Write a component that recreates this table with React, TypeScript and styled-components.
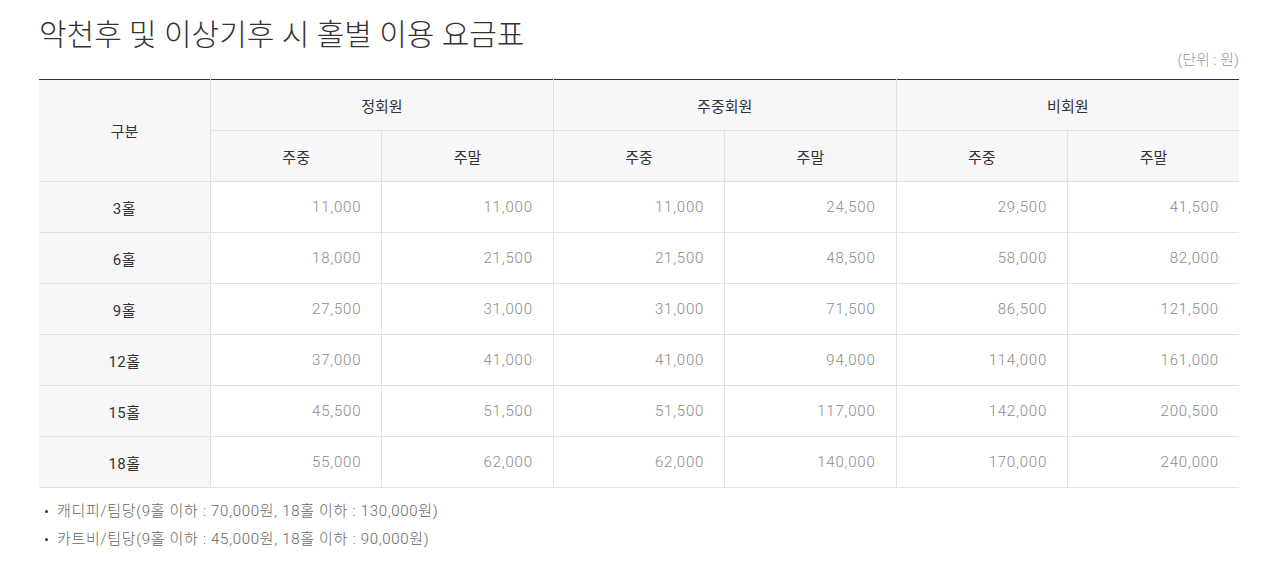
import React from 'react';
import styled, { createGlobalStyle } from 'styled-components';

const GlobalStyle = createGlobalStyle`
  body {
    margin: 0;
    background: #fff;
    font-family: Roboto, "Noto Sans CJK KR", sans-serif;
    font-weight: 300;
    color: #333;
  }
`;

const Page = styled.div`
  width: 1200px;
  padding: 17px 36px 0 39px;
`;

const Title = styled.h2`
  margin: 0;
  font-size: 30px;
  font-weight: 300;
  line-height: 36px;
  color: #333;
`;

const Unit = styled.p`
  margin: 0 0 12px;
  text-align: right;
  font-size: 15px;
  line-height: 14px;
  color: #999;
`;

const Table = styled.table`
  width: 100%;
  border-collapse: collapse;
  table-layout: fixed;
  border-top: 1px solid #333;
  font-size: 15px;
`;

const Th = styled.th`
  height: 50px;
  padding: 0;
  font-weight: 400;
  color: #333;
  background: #f7f7f9;
  border: 1px solid #e1e1e1;
  border-top: none;
  text-align: center;
  &:first-child { border-left: none; }
  &:last-child { border-right: none; }
`;

const RowHead = styled.th`
  height: 50px;
  padding: 0;
  font-weight: 400;
  color: #333;
  letter-spacing: 0.5px;
  background: #f7f7f9;
  border: 1px solid #e1e1e1;
  border-left: none;
  text-align: center;
`;

const Td = styled.td`
  height: 50px;
  padding: 0 20px 0 0;
  text-align: right;
  color: #8a8a8a;
  letter-spacing: 0.8px;
  border: 1px solid #e1e1e1;
  &:last-child { border-right: none; }
`;

const Notes = styled.ul`
  margin: 9px 0 0;
  padding: 0 0 0 6px;
  list-style: none;
`;

const Note = styled.li`
  position: relative;
  padding-left: 12px;
  font-size: 15px;
  line-height: 28px;
  letter-spacing: 0.7px;
  color: #666;
  &::before {
    content: '';
    position: absolute;
    left: 0;
    top: 13px;
    width: 3px;
    height: 3px;
    border-radius: 50%;
    background: #333;
  }
`;

const rows: [string, string[]][] = [
  ['3홀', ['11,000', '11,000', '11,000', '24,500', '29,500', '41,500']],
  ['6홀', ['18,000', '21,500', '21,500', '48,500', '58,000', '82,000']],
  ['9홀', ['27,500', '31,000', '31,000', '71,500', '86,500', '121,500']],
  ['12홀', ['37,000', '41,000', '41,000', '94,000', '114,000', '161,000']],
  ['15홀', ['45,500', '51,500', '51,500', '117,000', '142,000', '200,500']],
  ['18홀', ['55,000', '62,000', '62,000', '140,000', '170,000', '240,000']],
];

const groups = ['정회원', '주중회원', '비회원'];

export default function App() {
  return (
    <Page>
      <GlobalStyle />
      <Title>악천후 및 이상기후 시 홀별 이용 요금표</Title>
      <Unit>(단위 : 원)</Unit>
      <Table>
        <thead>
          <tr>
            <Th rowSpan={2}>구분</Th>
            {groups.map((g) => (
              <Th key={g} colSpan={2}>{g}</Th>
            ))}
          </tr>
          <tr>
            {groups.map((g) => (
              <React.Fragment key={g}>
                <Th>주중</Th>
                <Th>주말</Th>
              </React.Fragment>
            ))}
          </tr>
        </thead>
        <tbody>
          {rows.map(([label, values]) => (
            <tr key={label}>
              <RowHead>{label}</RowHead>
              {values.map((v, i) => (
                <Td key={i}>{v}</Td>
              ))}
            </tr>
          ))}
        </tbody>
      </Table>
      <Notes>
        <Note>캐디피/팀당(9홀 이하 : 70,000원, 18홀 이하 : 130,000원)</Note>
        <Note>카트비/팀당(9홀 이하 : 45,000원, 18홀 이하 : 90,000원)</Note>
      </Notes>
    </Page>
  );
}
